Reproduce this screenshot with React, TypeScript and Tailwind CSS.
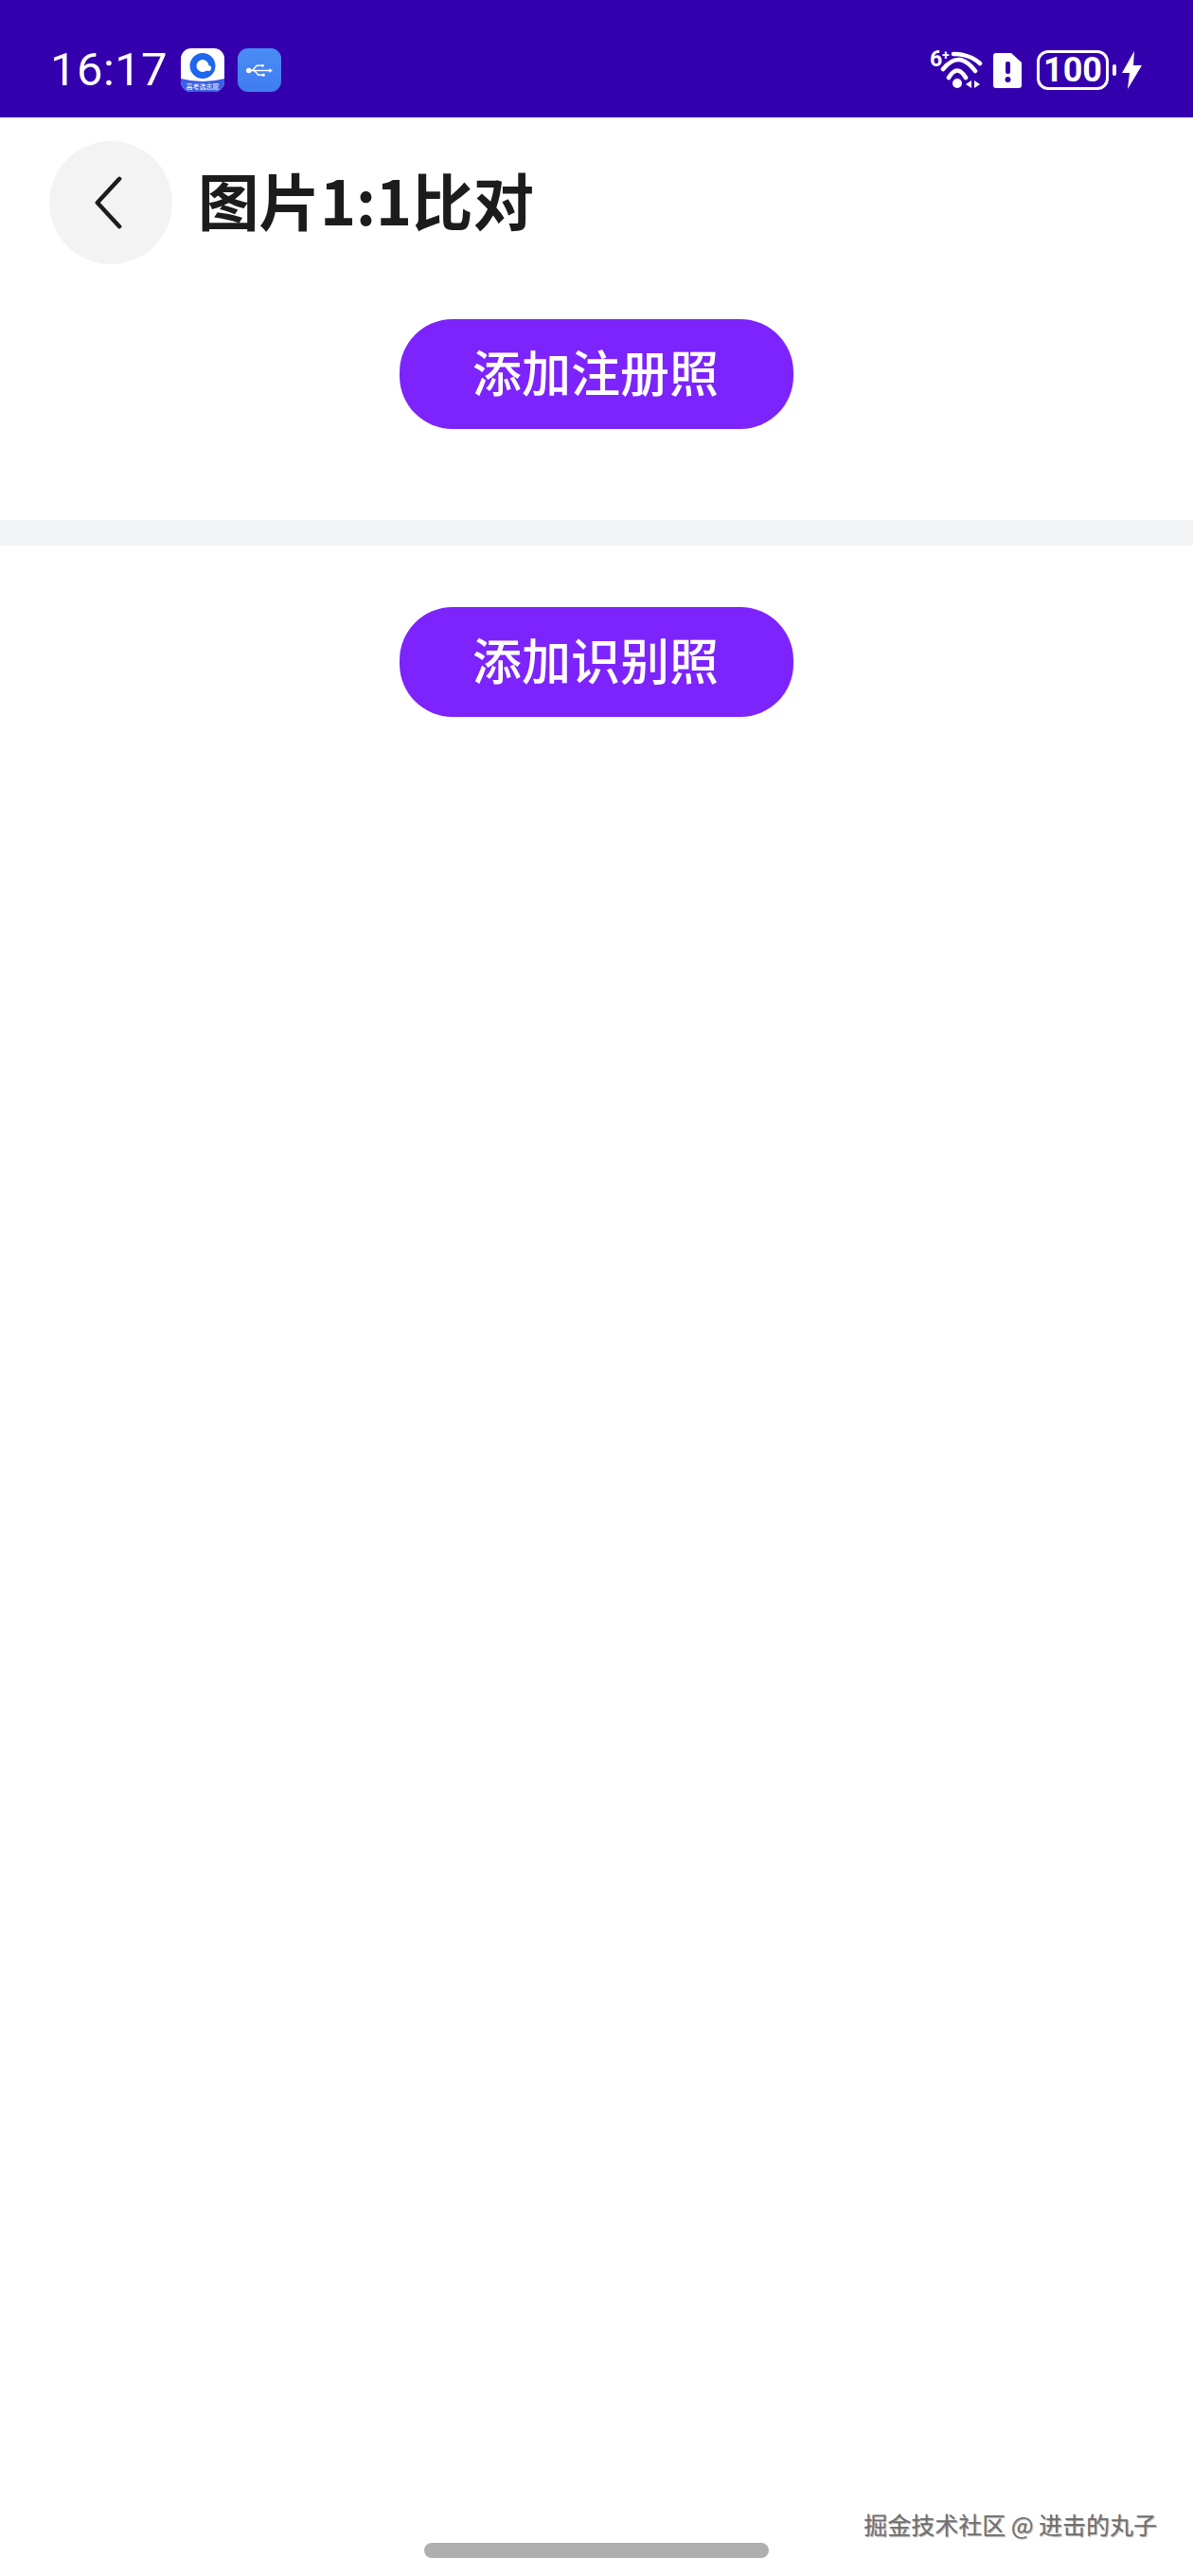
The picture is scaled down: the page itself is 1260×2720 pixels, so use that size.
const cjk = '"Noto Sans CJK SC", "Noto Sans", sans-serif';

function AppIcon() {
  return (
    <div className="relative w-[46px] h-[46px] rounded-[11px] bg-white overflow-hidden shrink-0">
      <svg viewBox="0 0 46 46" className="absolute inset-0 w-full h-full">
        <circle cx="23" cy="18.5" r="10" fill="none" stroke="#1f66ee" strokeWidth="7" />
        <circle cx="29" cy="21" r="3" fill="#fff" />
        <path d="M0 32 Q23 38 46 32 V46 H0 Z" fill="#3b5fe8" />
      </svg>
      <span className="absolute left-0 right-0 bottom-[2px] text-center text-[7px] leading-[8px] text-white" style={{ fontFamily: cjk }}>
        高考选志愿
      </span>
    </div>
  );
}

function UsbIcon() {
  return (
    <div className="w-[46px] h-[46px] rounded-[11px] bg-gradient-to-b from-[#4a8cf5] to-[#3f7df0] flex items-center justify-center shrink-0">
      <svg viewBox="0 0 30 18" className="w-[28px] h-[17px]" fill="none" stroke="#fff" strokeWidth="1.6">
        <circle cx="3" cy="9" r="2.2" fill="#fff" />
        <path d="M3 9 H27" />
        <path d="M7 9 L12 3.5 H17" />
        <path d="M9 9 L14 14 H19" />
        <circle cx="18.5" cy="3.5" r="1.6" fill="#fff" stroke="none" />
        <rect x="18" y="12.5" width="3" height="3" fill="#fff" stroke="none" />
        <path d="M26 6.5 L30 9 L26 11.5 Z" fill="#fff" stroke="none" />
      </svg>
    </div>
  );
}

function WifiIcon() {
  return (
    <div className="relative w-[56px] h-[44px] shrink-0">
      <span className="absolute left-0 top-0 text-white text-[23px] font-bold leading-[21px]" style={{ fontFamily: "Roboto, sans-serif" }}>6</span>
      <span className="absolute left-[13px] top-0 text-white text-[14px] font-bold leading-[12px]" style={{ fontFamily: "Roboto, sans-serif" }}>+</span>
      <svg viewBox="0 0 56 44" className="absolute inset-0 w-[56px] h-[44px]" fill="none">
        <path d="M25 5 Q42 5 53 15" stroke="#fff" strokeWidth="4.6" strokeLinecap="round" />
        <path d="M14 21 Q31 0 48 23" stroke="#fff" strokeWidth="4.6" strokeLinecap="round" />
        <path d="M20 30 Q29 15 38 30" stroke="#fff" strokeWidth="4.6" strokeLinecap="round" />
        <circle cx="29" cy="36" r="5" fill="#fff" />
        <path d="M38 37 L44 33 V41 Z" fill="#fff" />
        <path d="M47 33 L53 37 L47 41 Z" fill="#fff" />
      </svg>
    </div>
  );
}

function SimIcon() {
  return (
    <svg viewBox="0 0 30 37" className="w-[30px] h-[37px] shrink-0">
      <path d="M3 0 H19 L30 10 V34 Q30 37 27 37 H3 Q0 37 0 34 V3 Q0 0 3 0 Z" fill="#fff" />
      <rect x="13" y="9" width="5" height="13" rx="2" fill="#3400ae" />
      <circle cx="15.5" cy="28" r="3" fill="#3400ae" />
    </svg>
  );
}

function Bolt() {
  return (
    <svg viewBox="0 0 21 40" className="w-[21px] h-[40px] shrink-0">
      <path d="M13 0 L0 23 H8 L6 40 L21 15 H12 Z" fill="#fff" />
    </svg>
  );
}

function PurpleButton({ label }: { label: string }) {
  return (
    <div
      className="w-[416px] h-[116px] mx-auto pb-[7px] pr-[2px] rounded-[56px] bg-[#7c24fb] flex items-center justify-center text-white text-[52px] font-medium leading-none"
      style={{ fontFamily: cjk }}
    >
      {label}
    </div>
  );
}

export default function App() {
  return (
    <div className="relative w-[1260px] h-[2720px] bg-white flex flex-col overflow-hidden">
      <div className="h-[124px] shrink-0 bg-[#3400ae] flex items-center pt-[24px] pl-[53px] pr-[54px]">
        <span className="pb-[2px] text-white text-[49px] leading-none tracking-[0.4px]" style={{ fontFamily: "Roboto, sans-serif" }}>
          16:17
        </span>
        <div className="ml-[14px]"><AppIcon /></div>
        <div className="ml-[14px]"><UsbIcon /></div>
        <div className="ml-auto flex items-center">
          <WifiIcon />
          <div className="ml-[11px]"><SimIcon /></div>
          <div className="ml-[16px] w-[76px] h-[42px] rounded-[12px] border-[3px] border-white flex items-center justify-center text-white text-[36px] font-bold leading-none" style={{ fontFamily: "Roboto, sans-serif" }}>
            100
          </div>
          <div className="ml-[4px] w-[4px] h-[12px] rounded-[2px] bg-white" />
          <div className="ml-[6px]"><Bolt /></div>
        </div>
      </div>

      <div className="shrink-0 pt-[25px] pb-[96px]">
        <div className="flex items-center pl-[52px]">
          <div className="w-[130px] h-[130px] pr-[7px] rounded-full bg-[#f3f3f3] flex items-center justify-center">
            <svg viewBox="0 0 30 60" className="w-[30px] h-[56px]" fill="none" stroke="#1c1c1c" strokeWidth="4.8" strokeLinecap="round" strokeLinejoin="round">
              <path d="M28 3 L3 30 L28 57" />
            </svg>
          </div>
          <span className="ml-[27px] pb-[8px] text-[#1c1c1c] text-[64.5px] font-bold leading-none" style={{ fontFamily: cjk }}>
            图片1:1比对
          </span>
        </div>
        <div className="mt-[58px]">
          <PurpleButton label="添加注册照" />
        </div>
      </div>

      <div className="h-[27px] shrink-0 bg-[#f1f3f4]" />

      <div className="pt-[65px]">
        <PurpleButton label="添加识别照" />
      </div>

      <div className="mt-auto mb-[19px] mx-auto w-[364px] h-[16px] rounded-full bg-[#afafaf]" />

      <span
        className="absolute right-[38px] top-[2650px] text-[25px] font-normal leading-[30px] text-[#6f6f6f] [text-shadow:1px_1px_1px_#aaa]"
        style={{ fontFamily: cjk }}
      >
        掘金技术社区 @ 进击的丸子
      </span>
    </div>
  );
}
